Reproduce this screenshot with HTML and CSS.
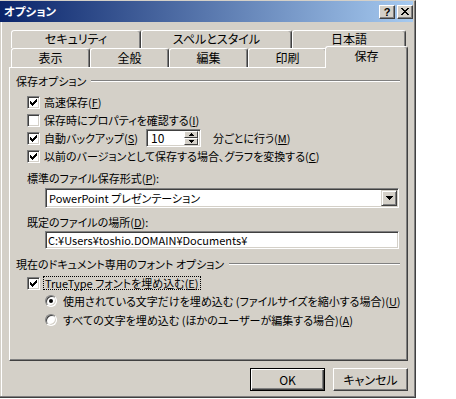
FILE: index.html
```html
<!DOCTYPE html>
<html lang="ja">
<head>
  <meta charset="UTF-8">
  <title>オプション</title>
  <link rel="stylesheet" href="styles.css">
</head>
<body>

  <div class="window">
    <div class="frame">
      <!-- Titelleiste -->
      <div class="titlebar">
        <span class="title">オプション</span>
        <div class="caption-btns">
          <span class="cap-btn help">?</span>
          <span class="cap-btn">
            <svg width="8" height="7" viewBox="0 0 8 7" shape-rendering="crispEdges"><path d="M0 0h2v1h-2zM6 0h2v1h-2zM1 1h2v1h-2zM5 1h2v1h-2zM2 2h4v1h-4zM3 3h2v1h-2zM2 4h4v1h-4zM1 5h2v1h-2zM5 5h2v1h-2zM0 6h2v1h-2zM6 6h2v1h-2z"/></svg>
          </span>
        </div>
      </div>

      <div class="client">
        <!-- Registerkarten -->
        <div class="tabs">
          <div class="tab-row back">
            <div class="tab" style="width:130px">セキュリティ</div>
            <div class="tab" style="width:151px">スペルとスタイル</div>
            <div class="tab" style="width:114px">日本語</div>
          </div>
          <div class="tab-row front">
            <div class="tab">表示</div>
            <div class="tab">全般</div>
            <div class="tab">編集</div>
            <div class="tab">印刷</div>
            <div class="tab active">保存</div>
          </div>
        </div>

        <div class="panel">
          <div class="group-head">
            <span>保存オプション</span>
            <span class="group-line"></span>
          </div>

          <div class="opt-list">
            <div class="opt">
              <span class="check on"><svg width="7" height="7" viewBox="0 0 7 7" shape-rendering="crispEdges"><path d="M6 0h1v1h-1zM5 1h2v1h-2zM0 2h1v1h-1zM4 2h3v1h-3zM0 3h2v1h-2zM3 3h3v1h-3zM0 4h5v1h-5zM1 5h3v1h-3zM2 6h1v1h-1z"/></svg></span>
              <span>高速保存(<u>F</u>)</span>
            </div>
            <div class="opt">
              <span class="check"></span>
              <span>保存時にプロパティを確認する(<u>I</u>)</span>
            </div>
            <div class="opt">
              <span class="check on"><svg width="7" height="7" viewBox="0 0 7 7" shape-rendering="crispEdges"><path d="M6 0h1v1h-1zM5 1h2v1h-2zM0 2h1v1h-1zM4 2h3v1h-3zM0 3h2v1h-2zM3 3h3v1h-3zM0 4h5v1h-5zM1 5h3v1h-3zM2 6h1v1h-1z"/></svg></span>
              <span class="spin-label">自動バックアップ(<u>S</u>)</span>
              <div class="spin">
                <span class="spin-value">10</span>
                <div class="spin-btns">
                  <span class="spin-btn"><svg width="5" height="3" viewBox="0 0 5 3" shape-rendering="crispEdges"><path d="M2 0h1v1h-1zM1 1h3v1h-3zM0 2h5v1h-5z"/></svg></span>
                  <span class="spin-btn"><svg width="5" height="3" viewBox="0 0 5 3" shape-rendering="crispEdges"><path d="M0 0h5v1h-5zM1 1h3v1h-3zM2 2h1v1h-1z"/></svg></span>
                </div>
              </div>
              <span>分ごとに行う(<u>M</u>)</span>
            </div>
            <div class="opt">
              <span class="check on"><svg width="7" height="7" viewBox="0 0 7 7" shape-rendering="crispEdges"><path d="M6 0h1v1h-1zM5 1h2v1h-2zM0 2h1v1h-1zM4 2h3v1h-3zM0 3h2v1h-2zM3 3h3v1h-3zM0 4h5v1h-5zM1 5h3v1h-3zM2 6h1v1h-1z"/></svg></span>
              <span>以前のバージョンとして保存する場合、グラフを変換する(<u>C</u>)</span>
            </div>
          </div>

          <div class="field-label first">標準のファイル保存形式(<u>P</u>):</div>
          <div class="combo">
            <span class="combo-text">PowerPoint プレゼンテーション</span>
            <span class="combo-btn"><svg width="7" height="4" viewBox="0 0 7 4" shape-rendering="crispEdges"><path d="M0 0h7v1h-7zM1 1h5v1h-5zM2 2h3v1h-3zM3 3h1v1h-1z"/></svg></span>
          </div>

          <div class="field-label second">既定のファイルの場所(<u>D</u>):</div>
          <div class="edit">C:¥Users¥toshio.DOMAIN¥Documents¥</div>

          <div class="group-head second">
            <span>現在のドキュメント専用のフォント オプション</span>
            <span class="group-line"></span>
          </div>

          <div class="opt truetype">
            <span class="check on"><svg width="7" height="7" viewBox="0 0 7 7" shape-rendering="crispEdges"><path d="M6 0h1v1h-1zM5 1h2v1h-2zM0 2h1v1h-1zM4 2h3v1h-3zM0 3h2v1h-2zM3 3h3v1h-3zM0 4h5v1h-5zM1 5h3v1h-3zM2 6h1v1h-1z"/></svg></span>
            <span class="focus">TrueType フォントを埋め込む(<u>E</u>)</span>
          </div>
          <div class="opt radio-opt">
            <span class="radio on"></span>
            <span>使用されている文字だけを埋め込む (ファイルサイズを縮小する場合)(<u>U</u>)</span>
          </div>
          <div class="opt radio-opt last">
            <span class="radio"></span>
            <span>すべての文字を埋め込む (ほかのユーザーが編集する場合)(<u>A</u>)</span>
          </div>
        </div>

        <div class="dlg-buttons">
          <button class="btn default">OK</button>
          <button class="btn">キャンセル</button>
        </div>
      </div>
    </div>
  </div>

</body>
</html>
```

FILE: styles.css
```css
/* Windows-Classic Farben */
:root {
  --face: #d4d0c8;
  --light: #fff;
  --shadow: #808080;
  --dark: #404040;
}
*, *::before, *::after { box-sizing: border-box; margin: 0; padding: 0; }
body {
  background: #fff;
  font-family: "Noto Sans CJK JP", "Liberation Sans", sans-serif;
  font-size: 11px;
  color: #000;
  font-feature-settings: "palt";
}

.window {
  width: 416px; height: 398px;
  background: var(--face);
  border-top: 1px solid var(--face);
  border-right: 1px solid var(--dark);
  border-bottom: 1px solid var(--dark);
  display: flex;
}
.frame {
  flex: 1;
  display: flex; flex-direction: column;
  border-right: 1px solid var(--shadow);
  border-bottom: 1px solid var(--shadow);
}

/* Titelleiste */
.titlebar {
  height: 21px; margin-right: 1px;
  background: linear-gradient(to right, #0a246a, #a6caf0);
  display: flex; align-items: center; justify-content: space-between;
  padding: 0 0 0 4px;
  color: #fff; font-weight: bold; font-size: 11.5px; line-height: 21px;
}
.caption-btns { display: flex; gap: 2px; }
.cap-btn {
  width: 16px; height: 14px;
  display: flex; align-items: center; justify-content: center;
  background: var(--face);
  border: 1px solid; border-color: var(--light) var(--dark) var(--dark) var(--light);
  box-shadow: inset -1px -1px var(--shadow);
}
.cap-btn.help {
  color: #000;
  font-family: "Liberation Sans", sans-serif;
  font-size: 11px; font-weight: bold; line-height: 12px;
}

.client {
  flex: 1;
  padding: 8px 0 0 9px;
  box-shadow: inset 1px 0 var(--face), inset 2px 0 var(--light);
}

/* Registerkarten */
.tabs { margin-left: 2px; width: 395px; }
.tab-row { display: flex; }
.tab-row.back { height: 18px; }
.tab-row.front { height: 19px; }
.tab {
  flex: none; width: 79px;
  background: var(--face);
  border: 1px solid; border-bottom: none;
  border-color: var(--light) var(--dark) transparent var(--light);
  border-radius: 3px 3px 0 0;
  box-shadow: inset -1px 0 var(--shadow);
  text-align: center;
  font-size: 12px;
}
.back .tab { line-height: 16px; }
.front .tab { line-height: 18px; }
.tab.active {
  position: relative; z-index: 1;
  width: 83px; height: 22px;
  margin: -2px -2px 0;
  line-height: 17px;
}

.panel {
  width: 399px; height: 294px;
  border: 1px solid; border-color: var(--light) var(--dark) var(--dark) var(--light);
  box-shadow: inset -1px -1px var(--shadow);
  padding: 5px 7px 0 6px;
  display: flex; flex-direction: column;
}

.group-head {
  height: 16px;
  display: flex; align-items: center; gap: 5px;
}
.group-head.second { margin-top: 7px; }
.group-line {
  flex: 1; height: 2px;
  border-top: 1px solid var(--shadow);
  border-bottom: 1px solid var(--light);
}

.opt-list { margin-top: 4px; }
.opt {
  height: 18px; margin-left: 11px;
  display: flex; align-items: center; gap: 4px;
  white-space: nowrap;
}
.opt.truetype { margin-top: 2px; }
.opt.radio-opt { margin-left: 29px; gap: 6px; }
.opt.last { margin-top: 1px; }

.check {
  width: 13px; height: 13px; flex: none;
  background: #fff;
  border: 1px solid; border-color: var(--shadow) var(--light) var(--light) var(--shadow);
  box-shadow: inset 1px 1px var(--dark), inset -1px -1px var(--face);
  padding: 2px;
  display: flex;
}
.check svg { display: block; }

.radio {
  width: 12px; height: 12px; flex: none;
  border-radius: 50%;
  background: #fff;
  border: 1px solid; border-color: var(--shadow) var(--light) var(--light) var(--shadow);
  box-shadow: inset 1px 1px var(--dark), inset -1px -1px var(--face);
  display: flex; align-items: center; justify-content: center;
}
.radio.on::after {
  content: ""; width: 4px; height: 4px;
  border-radius: 50%; background: #000;
}

.focus {
  outline: 1px dotted #000;
  line-height: 12px; padding: 0 1px;
}

/* Zahlenfeld */
.spin-label { width: 98px; flex: none; }
.spin {
  width: 55px; height: 18px; margin-right: 8px; flex: none;
  background: #fff;
  border: 1px solid; border-color: var(--shadow) var(--light) var(--light) var(--shadow);
  box-shadow: inset 1px 1px var(--dark), inset -1px -1px var(--face);
  padding: 2px 2px 2px 4px;
  display: flex; align-items: center; justify-content: space-between;
}
.spin-value { line-height: 14px; font-size: 12px; }
.spin-btns { display: flex; flex-direction: column; width: 14px; height: 14px; }
.spin-btn {
  flex: 1;
  background: var(--face);
  border: 1px solid; border-color: var(--light) var(--dark) var(--dark) var(--light);
  display: flex; align-items: center; justify-content: center;
}
.spin-btn svg { display: block; }

.field-label {
  height: 16px; line-height: 16px; margin-left: 11px;
}
.field-label.first { margin-top: 5px; }
.field-label.second { margin-top: 6px; }

.combo, .edit {
  width: 354px; margin-left: 29px;
  background: #fff;
  border: 1px solid; border-color: var(--shadow) var(--light) var(--light) var(--shadow);
  box-shadow: inset 1px 1px var(--dark), inset -1px -1px var(--face);
  white-space: nowrap;
}
.combo {
  height: 20px; margin-top: 2px;
  padding: 1px 1px 1px 3px;
  display: flex; align-items: center; justify-content: space-between;
}
.combo-btn {
  width: 16px; height: 16px;
  background: var(--face);
  border: 1px solid; border-color: var(--face) var(--dark) var(--dark) var(--face);
  box-shadow: inset 1px 1px var(--light), inset -1px -1px var(--shadow);
  display: flex; align-items: center; justify-content: center;
}
.combo-btn svg { display: block; }
.edit {
  height: 18px; margin-top: 1px;
  padding: 0 2px; line-height: 16px;
}

/* Dialog-Buttons */
.dlg-buttons {
  width: 399px; margin-top: 7px;
  display: flex; justify-content: flex-end; gap: 8px;
}
.btn {
  width: 75px; height: 23px;
  font: inherit; font-size: 12px; color: #000;
  background: var(--face);
  border: 1px solid; border-color: var(--light) var(--dark) var(--dark) var(--light);
  box-shadow: inset -1px -1px var(--shadow);
}
.btn.default {
  border-color: #000;
  box-shadow: inset 1px 1px var(--light), inset -1px -1px var(--dark), inset -2px -2px var(--shadow);
}
```
